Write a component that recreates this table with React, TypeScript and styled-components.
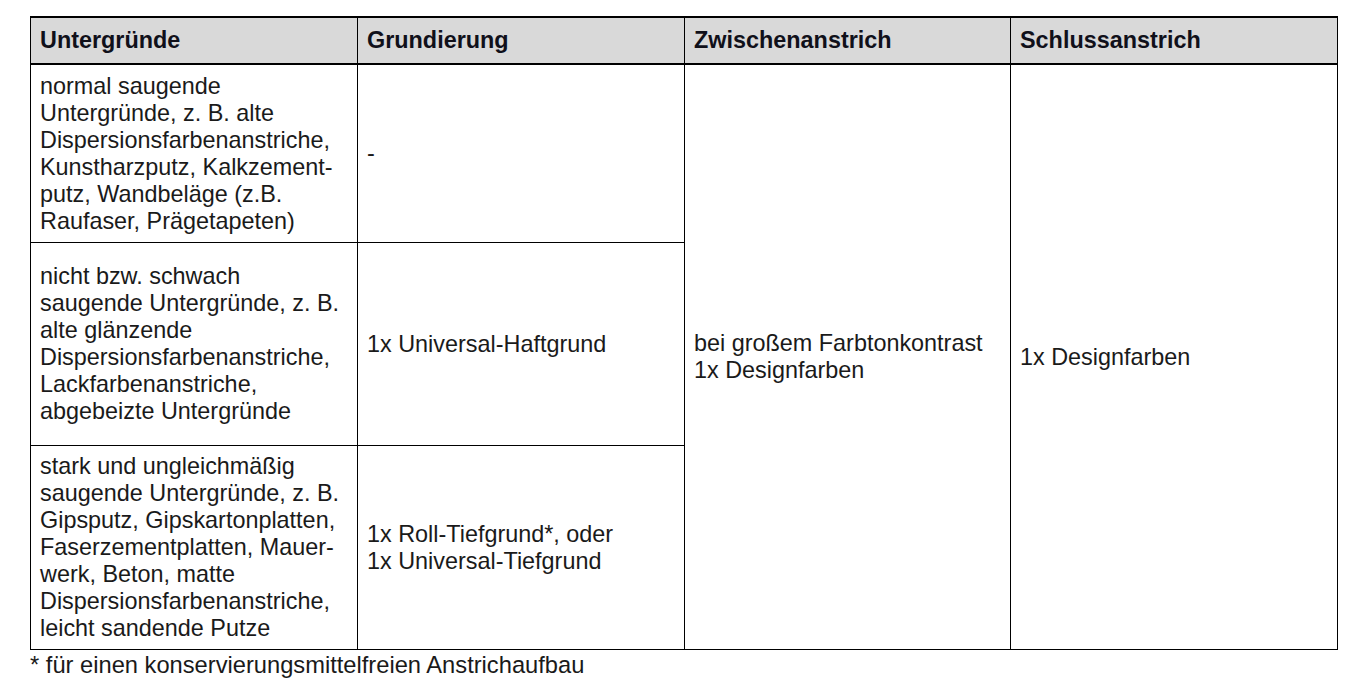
import React from "react";
import styled, { createGlobalStyle } from "styled-components";

const GlobalStyle = createGlobalStyle`
	html, body {
		margin: 0;
		padding: 0;
		background: #ffffff;
	}
	body {
		font-family: "Liberation Sans", Arial, sans-serif;
		color: #1a1a1a;
	}
`;

const Page = styled.div`
	padding: 16px 0 0 30px;
`;

const Grid = styled.div`
	display: grid;
	grid-template-columns: 327px 327px 326px 327px;
	grid-template-rows: 47px 178px 203px 204px;
	width: 1307px;
	border-top: 2px solid #000;
	border-left: 1px solid #000;
`;

const Cell = styled.div<{ $head?: boolean }>`
	box-sizing: border-box;
	display: flex;
	align-items: center;
	padding: 0 9px;
	border-right: 1px solid #000;
	border-bottom: ${(p) => (p.$head ? "2px" : "1px")} solid #000;
	background: ${(p) => (p.$head ? "#d9d9d9" : "#fff")};
	font-size: 23.4px;
	line-height: 27px;
	font-weight: ${(p) => (p.$head ? 700 : 400)};
	color: ${(p) => (p.$head ? "#10101a" : "#1a1a1a")};
	white-space: nowrap;
`;

const SpanCell = styled(Cell)<{ $col: number }>`
	grid-column: ${(p) => p.$col};
	grid-row: 2 / span 3;
`;

const Footnote = styled.p`
	margin: 2px 0 0;
	font-size: 23.7px;
	line-height: 27px;
	color: #1a1a1a;
`;

const headers = ["Untergründe", "Grundierung", "Zwischenanstrich", "Schlussanstrich"];

const rows: { base: string[]; primer: string[] }[] = [
	{
		base: [
			"normal saugende",
			"Untergründe, z. B. alte",
			"Dispersionsfarbenanstriche,",
			"Kunstharzputz, Kalkzement-",
			"putz, Wandbeläge (z.B.",
			"Raufaser, Prägetapeten)",
		],
		primer: ["-"],
	},
	{
		base: [
			"nicht bzw. schwach",
			"saugende Untergründe, z. B.",
			"alte glänzende",
			"Dispersionsfarbenanstriche,",
			"Lackfarbenanstriche,",
			"abgebeizte Untergründe",
		],
		primer: ["1x Universal-Haftgrund"],
	},
	{
		base: [
			"stark und ungleichmäßig",
			"saugende Untergründe, z. B.",
			"Gipsputz, Gipskartonplatten,",
			"Faserzementplatten, Mauer-",
			"werk, Beton, matte",
			"Dispersionsfarbenanstriche,",
			"leicht sandende Putze",
		],
		primer: ["1x Roll-Tiefgrund*, oder", "1x Universal-Tiefgrund"],
	},
];

const Lines = ({ lines }: { lines: string[] }) => (
	<div>
		{lines.map((l, i) => (
			<div key={i}>{l}</div>
		))}
	</div>
);

const App = () => {
	return (
		<Page>
			<GlobalStyle />
			<Grid>
				{headers.map((h) => (
					<Cell key={h} $head>
						{h}
					</Cell>
				))}
				{rows.map((r, idx) => (
					<React.Fragment key={idx}>
						<Cell style={{ gridColumn: 1, gridRow: idx + 2 }}>
							<Lines lines={r.base} />
						</Cell>
						<Cell style={{ gridColumn: 2, gridRow: idx + 2 }}>
							<Lines lines={r.primer} />
						</Cell>
					</React.Fragment>
				))}
				<SpanCell $col={3}>
					<Lines lines={["bei großem Farbtonkontrast", "1x Designfarben"]} />
				</SpanCell>
				<SpanCell $col={4}>
					<Lines lines={["1x Designfarben"]} />
				</SpanCell>
			</Grid>
			<Footnote>* für einen konservierungsmittelfreien Anstrichaufbau</Footnote>
		</Page>
	);
};

export default App;
